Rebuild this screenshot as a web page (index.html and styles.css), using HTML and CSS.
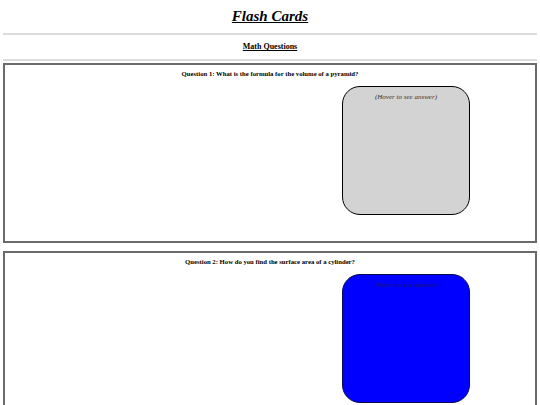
FILE: index.html
```html
<!DOCTYPE html>
<html>
<head>
<meta charset="utf-8">
<link rel="stylesheet" href="styles.css">
</head>
<body>
<h1 class="title">Flash Cards</h1>
<hr class="rule rule-top">
<h3 class="section">Math Questions</h3>
<hr class="rule rule-bottom">
<div class="box">
  <h4 class="question">Question 1: What is the formula for the volume of a pyramid?</h4>
  <div class="row">
    <div class="card card-gray"><p class="hint">(Hover to see answer)</p></div>
  </div>
</div>
<div class="box">
  <h4 class="question">Question 2: How do you find the surface area of a cylinder?</h4>
  <div class="row">
    <div class="card card-blue"><p class="hint">(Hover to see answer)</p></div>
  </div>
</div>
</body>
</html>
```

FILE: styles.css
```css
html, body {
  background: #fff;
}
body {
  margin: 0 3px;
  font-family: "Liberation Serif", "Times New Roman", serif;
  color: #000;
}
.title {
  margin: 8px 0 0;
  font-size: 15px;
  line-height: 16px;
  font-weight: bold;
  font-style: italic;
  text-decoration: underline;
  text-align: center;
}
.rule {
  border: 0;
  height: 2px;
  background: #dcdcdc;
  margin: 0;
}
.rule-top {
  margin-top: 9px;
}
.section {
  margin: 7px 0 0;
  font-size: 8px;
  line-height: 10px;
  font-weight: bold;
  text-decoration: underline;
  text-align: center;
}
.rule-bottom {
  margin-top: 7px;
}
.box {
  margin-top: 2px;
  margin-bottom: 8px;
  border: 2px solid #6a6a6a;
  padding: 5px 0 26px;
}
.question {
  margin: 0;
  font-size: 6.7px;
  line-height: 8px;
  font-weight: bold;
  text-align: center;
}
.row {
  display: flex;
  justify-content: flex-end;
  padding-right: 65px;
  margin-top: 8px;
}
.card {
  box-sizing: border-box;
  width: 128px;
  height: 129px;
  border: 1.5px solid #000;
  border-radius: 18px;
  padding-top: 6px;
}
.card-gray {
  background: #d3d3d3;
}
.card-blue {
  background: #0000ff;
  border-color: #0a0a50;
}
.hint {
  margin: 0;
  font-size: 7px;
  line-height: 9px;
  font-style: italic;
  text-align: center;
  color: #333;
}
.card-blue .hint {
  color: #1a1a6a;
}
```
